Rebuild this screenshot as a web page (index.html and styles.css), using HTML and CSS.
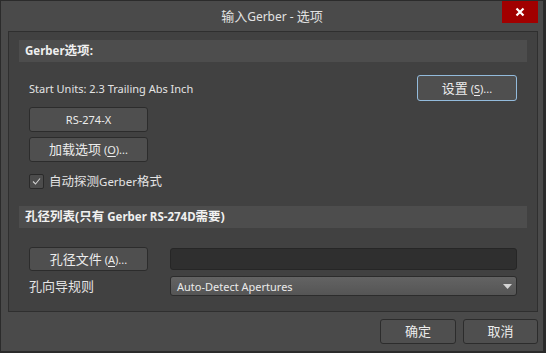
FILE: index.html
```html
<!DOCTYPE html>
<html lang="zh-CN">
<head>
    <meta charset="UTF-8">
    <meta name="viewport" content="width=device-width, initial-scale=1.0">
    <title>输入Gerber - 选项</title>
    <link rel="stylesheet" href="styles.css">
</head>
<body>
    <div class="window">
        <div class="titlebar">
            <span class="title"><span class="cjk">输入</span>Gerber - <span class="cjk">选项</span></span>
            <button class="close" aria-label="关闭">
                <svg width="10" height="10" viewBox="0 0 10 10">
                    <path d="M1.5 1.5 L8.5 8.5 M8.5 1.5 L1.5 8.5" stroke="#fff" stroke-width="2.2" fill="none"/>
                </svg>
            </button>
        </div>

        <div class="panel">
            <!-- Gerber options -->
            <div class="section-bar">Gerber<span class="cjk">选项</span>:</div>
            <div class="section-body first">
                <div class="units-row">
                    <span>Start Units: 2.3 Trailing Abs Inch</span>
                    <button class="btn btn-focus btn-settings"><span class="cjk">设置</span> (<u>S</u>)...</button>
                </div>
                <button class="btn btn-wide">RS-274-X</button>
                <button class="btn btn-wide btn-load"><span class="cjk">加载选项</span> (<u>O</u>)...</button>
                <label class="check-row">
                    <span class="checkbox">
                        <svg width="11" height="11" viewBox="0 0 11 11">
                            <path d="M2 5.5 L4.5 8 L9 2.5" stroke="#d0d0d0" stroke-width="1.1" fill="none"/>
                        </svg>
                    </span>
                    <span><span class="cjk-sm">自动探测</span>Gerber<span class="cjk-sm">格式</span></span>
                </label>
            </div>

            <!-- Aperture list -->
            <div class="section-bar second"><span class="cjk">孔径列表(只有</span> Gerber RS-274D<span class="cjk">需要)</span></div>
            <div class="section-body aperture">
                <button class="btn btn-wide"><span class="cjk">孔径文件</span> (<u>A</u>)...</button>
                <div class="text-field"></div>
                <span class="field-label cjk">孔向导规则</span>
                <div class="select">
                    <span>Auto-Detect Apertures</span>
                    <svg width="9" height="5" viewBox="0 0 9 5">
                        <path d="M0 0 H9 L4.5 5 Z" fill="#d4d4d4"/>
                    </svg>
                </div>
            </div>
        </div>

        <div class="footer">
            <button class="btn btn-ok"><span class="cjk">确定</span></button>
            <button class="btn btn-cancel"><span class="cjk">取消</span></button>
        </div>
    </div>
</body>
</html>
```

FILE: styles.css
```css
body {
    margin: 0;
    background-color: #2a2a2a;
    font-family: "Noto Sans", "Noto Sans CJK SC", sans-serif;
    font-size: 11px;
    color: #e4e4e4;
}

.cjk {
    font-size: 13px;
}

.cjk-sm {
    font-size: 12.5px;
}

.window {
    box-sizing: border-box;
    width: 544px;
    height: 352px;
    border: 1px solid #2b2b2b;
    background-color: #4a4a4a;
}

.titlebar {
    position: relative;
    height: 30px;
    display: flex;
    align-items: center;
    justify-content: center;
}

.title {
    font-size: 12px;
    line-height: 16px;
    color: #e2e2e2;
    margin-top: 1px;
}

.close {
    position: absolute;
    top: 0;
    right: 5px;
    width: 36px;
    height: 22px;
    border: none;
    padding: 0;
    background-color: #a10000;
    display: flex;
    align-items: center;
    justify-content: center;
}

.panel {
    box-sizing: border-box;
    width: 530px;
    height: 281px;
    margin-left: 7px;
    padding: 8px 10px 0;
    border: 1px solid #2f2f2f;
    background-color: #414141;
}

.section-bar {
    height: 22px;
    line-height: 22px;
    padding-left: 6px;
    background-color: #4d4d4d;
    font-weight: bold;
    font-size: 11.5px;
    color: #f0f0f0;
}

.section-bar .cjk {
    font-size: 12.5px;
}

.section-bar.second {
    margin-top: 17px;
}

.section-body {
    padding: 0 10px;
}

.section-body.first {
    padding-top: 13px;
}

.units-row {
    display: flex;
    justify-content: space-between;
    align-items: center;
    height: 26px;
}

.btn {
    box-sizing: border-box;
    display: block;
    height: 25px;
    padding: 0;
    border: 1px solid #2c2c2c;
    border-radius: 3px;
    background-color: #4f4f4f;
    font-family: inherit;
    font-size: 11px;
    line-height: 16px;
    color: #ececec;
    cursor: pointer;
}

.btn u {
    text-underline-offset: 2px;
}

.btn-focus {
    border-color: #93bbdc;
}

.btn-settings {
    width: 100px;
    height: 26px;
}

.btn-wide {
    width: 119px;
    margin-top: 6px;
}

.btn-load {
    margin-top: 5px;
}

.check-row {
    display: flex;
    align-items: center;
    gap: 5px;
    height: 15px;
    line-height: 15px;
    margin-top: 12px;
    font-size: 11.5px;
}

.checkbox {
    box-sizing: border-box;
    width: 15px;
    height: 15px;
    border: 1px solid #2a2a2a;
    border-radius: 2px;
    background-color: #4c4c4c;
    display: flex;
    align-items: center;
    justify-content: center;
}

.aperture {
    display: grid;
    grid-template-columns: 141px 347px;
    align-items: center;
    row-gap: 5px;
    padding-top: 19px;
}

.aperture .btn-wide {
    margin-top: 0;
    height: 24px;
}

.text-field {
    box-sizing: border-box;
    height: 22px;
    border: 1px solid #262626;
    border-radius: 3px;
    background-color: #2f2f2f;
}

.field-label {
    line-height: 18px;
}

.select {
    box-sizing: border-box;
    height: 20px;
    display: flex;
    align-items: center;
    justify-content: space-between;
    padding: 0 4px 0 6px;
    border: 1px solid #2c2c2c;
    border-radius: 3px;
    background: linear-gradient(#636363, #555555);
    color: #eaeaea;
}

.footer {
    display: flex;
    justify-content: flex-end;
    gap: 7px;
    padding: 7px 5px 0 0;
}

.btn-ok {
    width: 76px;
}

.btn-cancel {
    width: 75px;
}
```
